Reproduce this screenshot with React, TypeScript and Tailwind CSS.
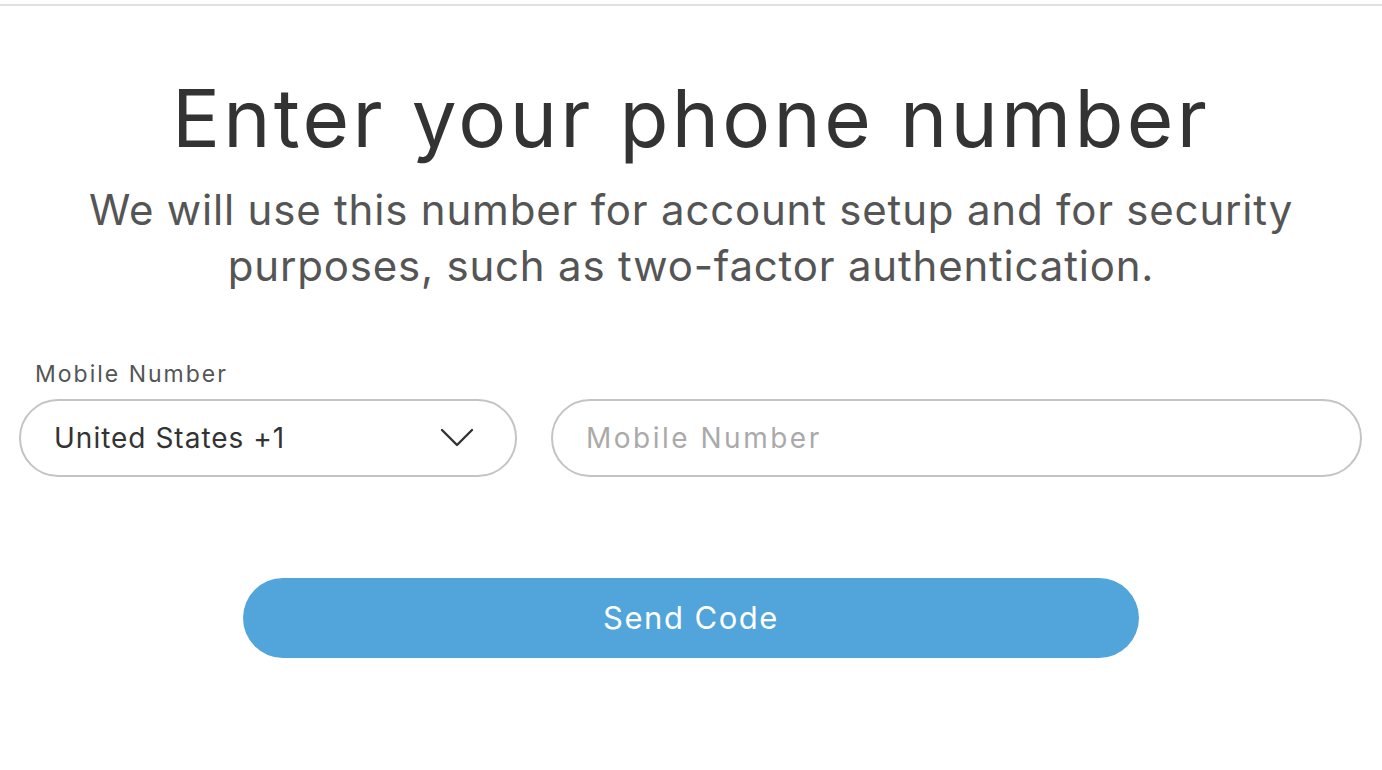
import React from "react";

const ChevronDown = () => (
  <svg width="34" height="20" viewBox="0 0 34 20" fill="none">
    <path d="M2 2L17 17L32 2" stroke="#333" strokeWidth="2.4" strokeLinecap="round" strokeLinejoin="round" />
  </svg>
);

const App = () => {
  return (
    <div className="min-h-[770px] w-full bg-white font-['Inter',sans-serif]">
      <div className="h-[4px]" />
      <div className="h-[2px] bg-[#e0e1e3]" />
      <div className="flex flex-col items-center pt-[68px]">
        <h1 className="text-[80px] leading-[88px] font-normal tracking-[3.3px] text-[#333333]">
          Enter your phone number
        </h1>
        <p className="mt-[20px] text-center text-[42px] leading-[56px] tracking-[0.8px] text-[#555555]">
          We will use this number for account setup and for security
          <br />
          purposes, such as two-factor authentication.
        </p>
      </div>

      <div className="mt-[66px] px-[19px] pr-[20px]">
        <label className="ml-[16px] block text-[23px] leading-[28px] tracking-[2px] text-[#555555]">
          Mobile Number
        </label>
        <div className="mt-[11px] flex gap-[34px]">
          <div className="flex h-[78px] w-[498px] shrink-0 items-center justify-between rounded-full border-2 border-[#c4c4c4] pl-[33px] pr-[41px]">
            <span className="text-[28px] tracking-[1px] text-[#333333]">United States +1</span>
            <ChevronDown />
          </div>
          <div className="flex h-[78px] flex-1 items-center rounded-full border-2 border-[#c4c4c4] pl-[33px]">
            <input
              className="w-full bg-transparent text-[28px] tracking-[2.5px] text-[#333333] outline-none placeholder:text-[#aaaaaa]"
              placeholder="Mobile Number"
            />
          </div>
        </div>
      </div>

      <div className="mt-[101px] flex justify-center">
        <button className="h-[80px] w-[896px] rounded-full bg-[#51a5da] text-[31px] tracking-[1.5px] text-white">
          Send Code
        </button>
      </div>
    </div>
  );
};

export default App;
